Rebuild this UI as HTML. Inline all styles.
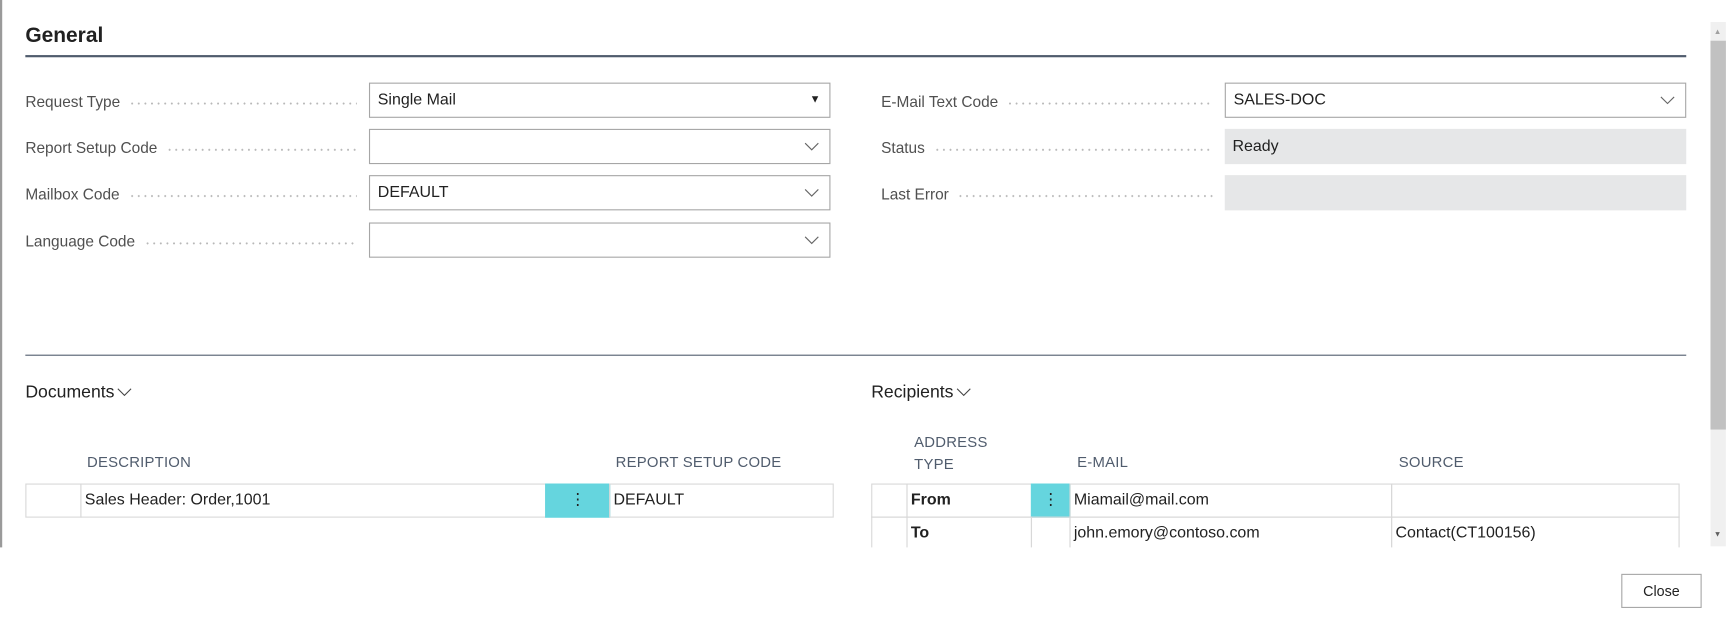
<!DOCTYPE html>
<html><head><meta charset="utf-8"><style>
html,body{margin:0;padding:0;background:#fff;overflow:hidden;width:1727px;height:630px}
#w{position:absolute;left:0;top:0;width:1568px;height:572px;transform:scale(1.10140);transform-origin:0 0;font-family:"Liberation Sans",sans-serif;color:#212121}
.a{position:absolute}
.lr{position:absolute;display:flex;align-items:center;width:301px;height:20px;font-size:14px;color:#505050;white-space:nowrap}
.lr i{flex:1;margin-left:8px;height:2px;background-image:radial-gradient(circle,#b8b8b8 0.8px,transparent 1px);background-size:6px 2px;background-repeat:repeat-x;margin-top:3px}
.box{position:absolute;border:1px solid #a6a6a6;background:#fff;box-sizing:border-box;height:32px;font-size:14.5px;line-height:30px;padding-left:7px}
.gbox{position:absolute;background:#e6e7e8;height:32px;font-size:14.5px;line-height:32px;padding-left:7px;box-sizing:border-box}
.chev{position:absolute;right:9px;top:11px}
.hdr{font-size:13.5px;color:#505c6d;letter-spacing:.2px}
.cell{position:absolute;border:1px solid #d8d8d8;box-sizing:border-box;font-size:14.5px;line-height:28px;padding-left:3px;white-space:nowrap}
.teal{background:#65d5de;text-align:center;padding:0}
</style></head><body><div id="w">
<div class="a" style="left:0;top:0;width:2px;height:572px;background:#9a9a9a"></div>
<div class="a" style="left:23px;top:22px;font-size:19px;font-weight:bold;color:#212121">General</div>
<div class="a" style="left:23px;top:50px;width:1508px;height:2px;background:#505c6d"></div>

<div class="lr" style="left:23px;top:82px">Request Type<i></i></div>
<div class="box" style="left:335px;top:75px;width:419px">Single Mail<span class="a" style="right:8px;top:0;font-size:10px">▼</span></div>
<div class="lr" style="left:23px;top:124px">Report Setup Code<i></i></div>
<div class="box" style="left:335px;top:117px;width:419px"><svg class="chev" width="14" height="9"><path d="M1 1 L7 7 L13 1" fill="none" stroke="#666" stroke-width="1"/></svg></div>
<div class="lr" style="left:23px;top:166px">Mailbox Code<i></i></div>
<div class="box" style="left:335px;top:159px;width:419px">DEFAULT<svg class="chev" width="14" height="9"><path d="M1 1 L7 7 L13 1" fill="none" stroke="#666" stroke-width="1"/></svg></div>
<div class="lr" style="left:23px;top:209px">Language Code<i></i></div>
<div class="box" style="left:335px;top:202px;width:419px"><svg class="chev" width="14" height="9"><path d="M1 1 L7 7 L13 1" fill="none" stroke="#666" stroke-width="1"/></svg></div>

<div class="lr" style="left:800px;top:82px">E-Mail Text Code<i></i></div>
<div class="box" style="left:1112px;top:75px;width:419px">SALES-DOC<svg class="chev" width="14" height="9"><path d="M1 1 L7 7 L13 1" fill="none" stroke="#666" stroke-width="1"/></svg></div>
<div class="lr" style="left:800px;top:124px">Status<i></i></div>
<div class="gbox" style="left:1112px;top:117px;width:419px">Ready</div>
<div class="lr" style="left:800px;top:166px">Last Error<i></i></div>
<div class="gbox" style="left:1112px;top:159px;width:419px"></div>

<div class="a" style="left:23px;top:322px;width:1508px;height:1px;background:#505c6d"></div>

<div class="a" style="left:23px;top:348px;font-size:16px">Documents<svg width="14" height="9" style="margin-left:2px"><path d="M1 1 L7 7 L13 1" fill="none" stroke="#444" stroke-width="1"/></svg></div>
<div class="a hdr" style="left:79px;top:412px">DESCRIPTION</div>
<div class="a hdr" style="left:559px;top:412px">REPORT SETUP CODE</div>
<div class="cell" style="left:23px;top:439px;width:51px;height:31px"></div>
<div class="cell" style="left:73px;top:439px;width:423px;height:31px">Sales Header: Order,1001</div>
<div class="cell teal" style="left:495px;top:439px;width:59px;height:31px;border-color:#65d5de">⋮</div>
<div class="cell" style="left:553px;top:439px;width:204px;height:31px">DEFAULT</div>

<div class="a" style="left:791px;top:348px;font-size:16px">Recipients<svg width="14" height="9" style="margin-left:2px"><path d="M1 1 L7 7 L13 1" fill="none" stroke="#444" stroke-width="1"/></svg></div>
<div class="a hdr" style="left:830px;top:392px;line-height:20px">ADDRESS<br>TYPE</div>
<div class="a hdr" style="left:978px;top:412px">E-MAIL</div>
<div class="a hdr" style="left:1270px;top:412px">SOURCE</div>
<div class="cell" style="left:791px;top:439px;width:33px;height:31px"></div>
<div class="cell" style="left:823px;top:439px;width:114px;height:31px;font-weight:bold">From</div>
<div class="cell teal" style="left:936px;top:439px;width:36px;height:31px;border-color:#65d5de">⋮</div>
<div class="cell" style="left:971px;top:439px;width:293px;height:31px">Miamail@mail.com</div>
<div class="cell" style="left:1263px;top:439px;width:262px;height:31px"></div>
<div class="cell" style="left:791px;top:469px;width:33px;height:40px;border-bottom:none"></div>
<div class="cell" style="left:823px;top:469px;width:114px;height:40px;font-weight:bold;border-bottom:none">To</div>
<div class="cell" style="left:936px;top:469px;width:36px;height:40px;border-bottom:none"></div>
<div class="cell" style="left:971px;top:469px;width:293px;height:40px;border-bottom:none">john.emory@contoso.com</div>
<div class="cell" style="left:1263px;top:469px;width:262px;height:40px;border-bottom:none">Contact(CT100156)</div>
<div class="a" style="left:0;top:497px;width:1552px;height:75px;background:#fff"></div>

<div class="a" style="left:1553px;top:20px;width:14px;height:476px;background:#f0f0f0"></div>
<div class="a" style="left:1553px;top:37px;width:14px;height:353px;background:#c1c1c1"></div>
<div class="a" style="left:1556px;top:26px;font-size:7px;color:#a0a0a0">▲</div>
<div class="a" style="left:1556px;top:482px;font-size:7px;color:#606060">▼</div>

<div class="a" style="left:1472px;top:521px;width:73px;height:31px;border:1px solid #a6a6a6;box-sizing:border-box;font-size:13px;text-align:center;line-height:29px">Close</div>
</div></body></html>
